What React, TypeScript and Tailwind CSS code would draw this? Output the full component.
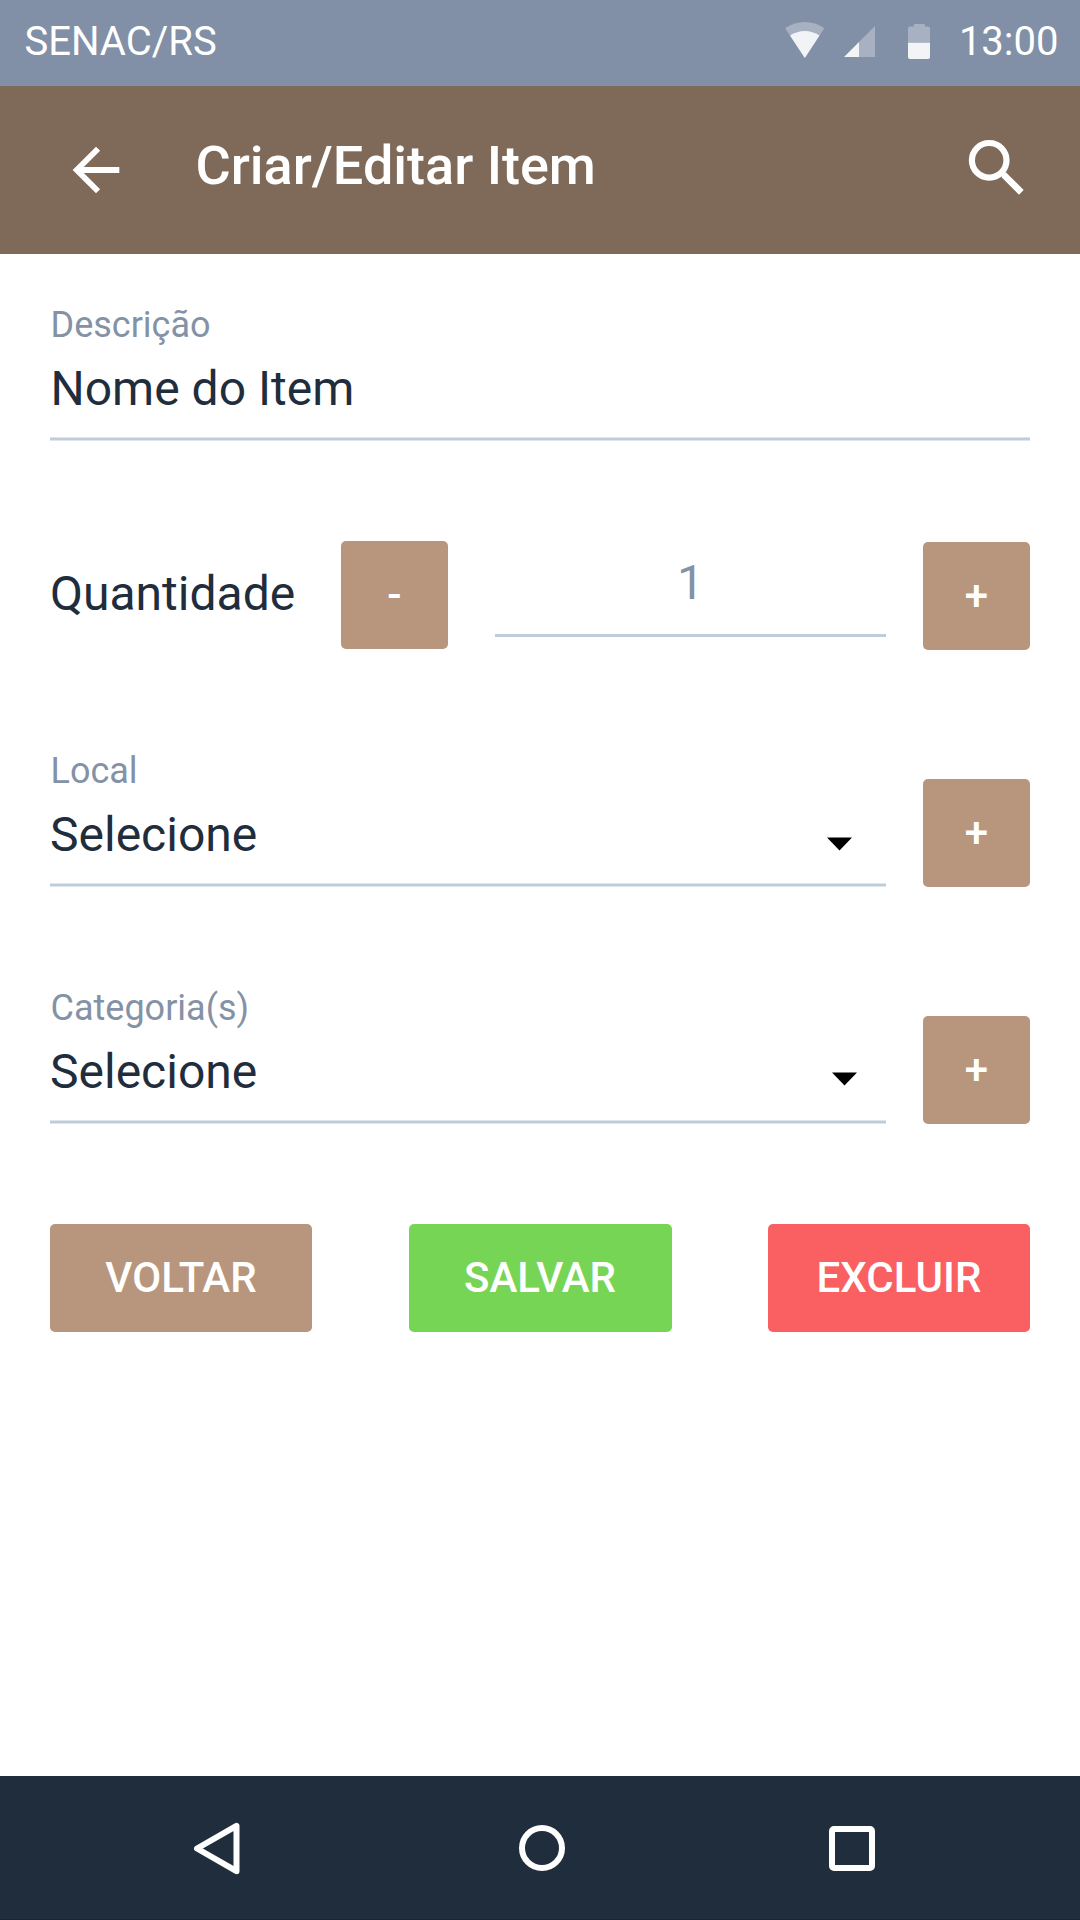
import type { ReactNode } from "react";

function StatusBar() {
  return (
    <div className="flex h-[86px] items-start justify-between bg-[#8190a6] pl-[24.5px] pr-[21.5px] text-[40px] leading-[48px] text-white">
      <span className="pt-[18px]">SENAC/RS</span>
      <div className="flex items-start">
        <svg className="mt-[20px] h-[40px] w-[150px] shrink-0" viewBox="784 20 150 40" fill="#fff">
          <path fillOpacity=".3" d="M785.2 28.2Q794 22 804.8 22Q815.500 22 824.400 28.200L804.800 58Z" />
          <path fillOpacity=".85" d="M790 35.600Q797 31 804.800 31Q812.500 31 819.500 35.600L804.800 58Z" />
          <path fillOpacity=".3" d="M859 42L875 26V57H859Z" />
          <path fillOpacity=".9" d="M844 57L859 42V57Z" />
          <path fillOpacity=".3" d="M908 42.700V28.500Q908 26.600 910 26.600H913.800V25Q913.800 24 915 24H923.800Q925 24 925 25V26.600H928Q930 26.600 930 28.500V42.700Z" />
          <path fillOpacity=".9" d="M908 42.700H930V57Q930 59 928 59H910Q908 59 908 57Z" />
        </svg>
        <span className="ml-[24.5px] pt-[18px]">13:00</span>
      </div>
    </div>
  );
}

function Header() {
  return (
    <header className="flex h-[168px] items-start bg-[#7f6a59] pl-[61px] pr-[53px] text-white">
      <svg className="mt-[49px] size-[70px]" viewBox="0 0 24 24" fill="currentColor">
        <path d="M20 11H7.830l5.590-5.590L12 4l-8 8 8 8 1.410-1.410L7.830 13H20v-2z" />
      </svg>
      <h1 className="ml-[64.5px] mt-[48px] flex-1 text-[54px] font-medium leading-[64px]">Criar/Editar Item</h1>
      <svg className="mt-[50px] h-[62px] w-[62px]" viewBox="965 136 62 62" fill="none" stroke="currentColor">
        <circle cx="989.200" cy="160.300" r="17.300" strokeWidth="6.200" />
        <path d="M1002 173L1005 176" strokeWidth="4" />
        <path d="M1006 177L1019 190" strokeWidth="6.600" strokeLinecap="square" strokeLinejoin="round" />
      </svg>
    </header>
  );
}

function Line() {
  return <div className="h-1 border-y border-[#dfe5ec] bg-[#c0ccda]" />;
}

function Field({ label, value, valueClass = "", caret }: { label: string; value: string; valueClass?: string; caret?: ReactNode }) {
  return (
    <div className="relative flex-1">
      <div className="pl-[0.5px] text-[36px] leading-[40px] text-[#8492a6]">{label}</div>
      <div className={`mb-5 mt-4 text-[48px] leading-[56px] ${valueClass}`}>{value}</div>
      <Line />
      {caret}
    </div>
  );
}

function Caret({ className }: { className: string }) {
  return (
    <svg className={`absolute h-[14px] w-[25px] ${className}`} viewBox="0 0 25 14">
      <path d="M0 .5H25L12.500 13.500Z" />
    </svg>
  );
}

function SquareButton({ children }: { children: string }) {
  return (
    <button className="h-[108px] w-[107px] shrink-0 rounded-[5px] bg-[#b8967d] text-[42px] font-medium leading-none text-white">
      {children}
    </button>
  );
}

function NavBar() {
  return (
    <nav className="flex h-[144px] items-center border-b border-[#1b2436] bg-[#1f2d3d] pl-[190px]">
      <svg className="h-[60px] w-[54px]" viewBox="190 1818 54 60" fill="none" stroke="#fff" strokeWidth="6" strokeLinejoin="round">
        <path d="M197 1848.500L236.500 1825.800V1871.200Z" />
      </svg>
      <div className="ml-[275px] size-[46px] rounded-full border-[6px] border-white" />
      <div className="ml-[264px] mt-[1px] h-[45px] w-[46px] rounded-[5px] border-[6px] border-white" />
    </nav>
  );
}

export default function App() {
  return (
    <div className="flex h-[1920px] w-[1080px] flex-col overflow-hidden bg-white font-['Roboto',sans-serif] text-[#1f2d3d]">
      <StatusBar />
      <Header />
      <main className="flex-1 px-[50px] pt-[51px]">
        <div className="flex">
          <Field label="Descrição" value="Nome do Item" valueClass="pl-[0.5px]" />
        </div>
        <div className="mt-[100px] flex h-[109px] items-start">
          <span className="mt-[25px] w-[291px] text-[48px] leading-[56px]">Quantidade</span>
          <SquareButton>-</SquareButton>
          <div className="ml-[47px] mr-[37px] mt-[14px] flex-1 border-b-[3px] border-[#c0ccda] pb-[23px] text-center text-[48px] leading-[56px] text-[#8492a6]">
            1
          </div>
          <div className="mt-px">
            <SquareButton>+</SquareButton>
          </div>
        </div>
        <div className="mt-[101px] flex items-end gap-[37px]">
          <Field label="Local" value="Selecione" caret={<Caret className="left-[777px] top-[86px]" />} />
          <SquareButton>+</SquareButton>
        </div>
        <div className="mt-[101px] flex items-end gap-[37px]">
          <Field label="Categoria(s)" value="Selecione" caret={<Caret className="left-[782px] top-[84px]" />} />
          <SquareButton>+</SquareButton>
        </div>
        <div className="mt-[100px] flex justify-between text-[42px] font-medium text-white">
          <button className="h-[108px] w-[262px] rounded-[5px] bg-[#b8967d] pb-[2px]">VOLTAR</button>
          <button className="h-[108px] w-[263px] rounded-[5px] bg-[#77d555] pb-[2px]">SALVAR</button>
          <button className="h-[108px] w-[262px] rounded-[5px] bg-[#fa5f62] pb-[2px]">EXCLUIR</button>
        </div>
      </main>
      <NavBar />
    </div>
  );
}
